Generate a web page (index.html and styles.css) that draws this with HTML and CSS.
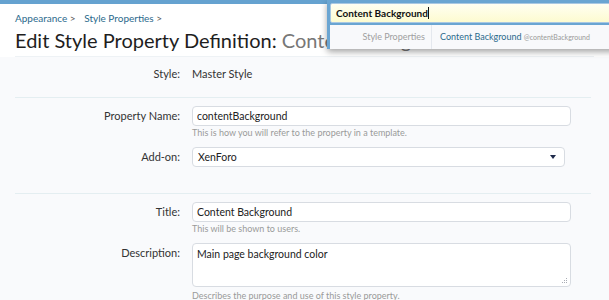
FILE: index.html
```html
<!DOCTYPE html>
<html lang="en">
<head>
    <meta charset="UTF-8">
    <title>Edit Style Property Definition</title>
    <link rel="stylesheet" href="styles.css">
</head>
<body>
    <div class="topbar"></div>

    <div class="header">
        <div class="breadcrumb">
            <a href="#">Appearance</a> <span class="arrow">&gt;</span>
            <a href="#">Style Properties</a> <span class="arrow">&gt;</span>
        </div>
        <h1>Edit Style Property Definition: <span class="muted">Content Background</span></h1>
    </div>

    <form class="form">
        <div class="row static">
            <label>Style:</label>
            <div class="value">Master Style</div>
        </div>

        <hr class="divider">

        <div class="row">
            <label>Property Name:</label>
            <div class="field">
                <input type="text" class="textbox" value="contentBackground">
                <p class="hint">This is how you will refer to the property in a template.</p>
            </div>
        </div>
        <div class="row">
            <label>Add-on:</label>
            <div class="field">
                <div class="select">
                    <span>XenForo</span>
                    <span class="caret"></span>
                </div>
            </div>
        </div>

        <hr class="divider second">

        <div class="row">
            <label>Title:</label>
            <div class="field">
                <input type="text" class="textbox" value="Content Background">
                <p class="hint">This will be shown to users.</p>
            </div>
        </div>
        <div class="row">
            <label>Description:</label>
            <div class="field">
                <div class="textarea">
                    Main page background color
                    <svg class="grip" width="7" height="7" viewBox="0 0 7 7">
                        <g fill="#a9adb5">
                            <rect x="5" y="1" width="1" height="1"/>
                            <rect x="3" y="3" width="1" height="1"/>
                            <rect x="5" y="3" width="1" height="1"/>
                            <rect x="1" y="5" width="1" height="1"/>
                            <rect x="3" y="5" width="1" height="1"/>
                            <rect x="5" y="5" width="1" height="1"/>
                        </g>
                    </svg>
                </div>
                <p class="hint last">Describes the purpose and use of this style property.</p>
            </div>
        </div>
    </form>

    <!-- quick search popup -->
    <div class="search">
        <div class="search-input">Content Background<span class="cursor"></span></div>
        <div class="search-result">
            <div class="result-type">Style Properties</div>
            <div class="result-item">
                <a href="#">Content Background</a>
                <span class="result-key">@contentBackground</span>
            </div>
        </div>
    </div>
</body>
</html>
```

FILE: styles.css
```css
body {
    margin: 0;
    background-color: #f9fafc;
    font-family: "Lato", "DejaVu Sans", sans-serif;
    color: #333;
    overflow: hidden;
}
a {
    color: #2b6a8c;
    text-decoration: none;
}
.topbar {
    height: 4px;
    background-color: #65a2d0;
}
.header {
    background-color: #ffffff;
    padding: 7px 15px 0 15px;
}
.breadcrumb {
    font-size: 10px;
    color: #2b6a8c;
    line-height: 14px;
}
.breadcrumb .arrow {
    color: #555;
    margin-right: 6px;
}
h1 {
    margin: 1px 0 0 0;
    padding-bottom: 2px;
    font-weight: normal;
    font-size: 20px;
    line-height: 28px;
    color: #1e1e1e;
    border-bottom: 1px solid #eef2f5;
}
h1 .muted {
    color: #777;
}
.form {
    padding: 0 15px;
}
.row {
    display: grid;
    grid-template-columns: 165px 380px;
    column-gap: 12px;
    font-size: 11px;
}
.row label {
    text-align: right;
    color: #333;
    line-height: 20px;
}
.row.static {
    padding: 10px 0 16px 0;
}
.row.static label,
.row.static .value {
    line-height: 14px;
}
.value {
    color: #333;
}
.divider {
    border: none;
    border-top: 1px solid #e4eef1;
    margin: 0 0 8px 0;
    width: 576px;
}
.divider.second {
    margin-top: 26px;
}
.textbox,
.select,
.textarea {
    box-sizing: border-box;
    width: 379px;
    height: 20px;
    border: 1px solid #d8dce2;
    border-radius: 4px;
    background-color: #ffffff;
    font-family: inherit;
    font-size: 10.5px;
    color: #222;
    padding: 0 4px;
    margin: 0;
    display: block;
}
.select {
    width: 373px;
    display: flex;
    align-items: center;
    justify-content: space-between;
    padding: 0 8px 0 5px;
}
.caret {
    width: 0;
    height: 0;
    border-left: 3.5px solid transparent;
    border-right: 3.5px solid transparent;
    border-top: 4px solid #1e2a4a;
}
.textarea {
    height: 44px;
    padding: 3px 4px;
    line-height: 14px;
    position: relative;
}
.grip {
    position: absolute;
    right: 2px;
    bottom: 2px;
}
.hint {
    margin: 0 0 7px 0;
    font-size: 9px;
    line-height: 14px;
    color: #9a9a9a;
}
.hint.last {
    margin-top: 2px;
}

/* quick search */
.search {
    position: absolute;
    top: 0;
    left: 327px;
    width: 292px;
    background-color: #6aa5d2;
    padding: 3px 3px 0 3px;
    box-shadow: 0 3px 6px rgba(0, 0, 0, 0.35);
    border-radius: 0 0 3px 3px;
}
.search-input {
    height: 18px;
    background: linear-gradient(#fffff2, #fdfbd0);
    border: 1px solid #a9c8e2;
    border-radius: 2px;
    font-size: 10px;
    font-weight: bold;
    color: #111;
    padding: 0 5px;
    line-height: 18px;
}
.cursor {
    display: inline-block;
    width: 1px;
    height: 12px;
    background-color: #111;
    vertical-align: -2px;
}
.search-result {
    display: flex;
    margin: 2px -3px 0 -3px;
    height: 24px;
    background-color: #f8f9fb;
    border-left: 3px solid #6aa5d2;
    font-size: 9px;
    line-height: 24px;
}
.result-type {
    width: 95px;
    text-align: right;
    color: #a0a0a0;
    padding-right: 6px;
    border-right: 1px solid #e4e8ee;
}
.result-item {
    padding-left: 8px;
}
.result-item a {
    color: #2b6a8c;
}
.result-key {
    font-size: 7px;
    color: #999;
}
```
